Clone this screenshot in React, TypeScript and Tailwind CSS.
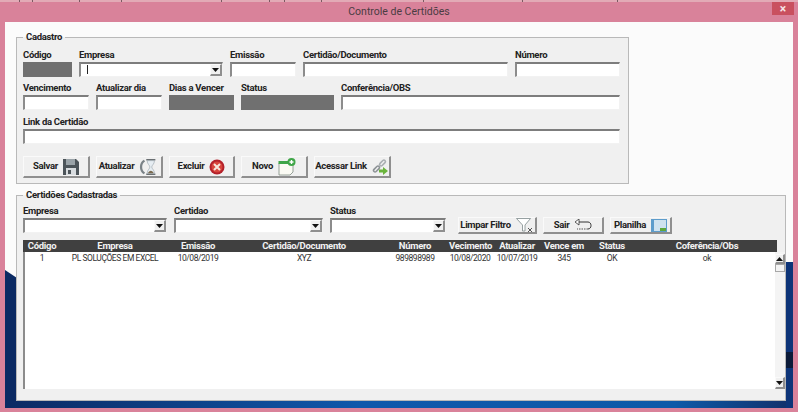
import React from "react";

const font = "font-['Roboto',sans-serif]";
const boldText = "text-[9.5px] tracking-[-0.3px] font-bold";

const sunken = "border-t-2 border-l-2 border-t-[#7d7d7d] border-l-[#8c8c8c] border-r border-b border-r-[#f2f2f2] border-b-[#f2f2f2]";
const raised = "flex items-center justify-center bg-[#f0f0f0] border-t border-l border-t-[#fafafa] border-l-[#fafafa] border-r-2 border-b-2 border-r-[#8f8f8f] border-b-[#8f8f8f]";

function Label({ children }: { children: React.ReactNode }) {
  return <div className={`h-[13px] leading-[12px] text-[#222] whitespace-nowrap ${boldText}`}>{children}</div>;
}

function Field({ label, width, gray }: { label: string; width: string; gray?: boolean }) {
  return (
    <div className={width}>
      <Label>{label}</Label>
      {gray ? <div className="h-[15px] bg-[#707070]" /> : <div className={`h-[15px] bg-white ${sunken}`} />}
    </div>
  );
}

function Arrow({ up }: { up?: boolean }) {
  return (
    <svg width="7" height="4" viewBox="0 0 7 4">
      <path d={up ? "M3.5 0L7 4H0z" : "M0 0h7L3.5 4z"} fill="#111" />
    </svg>
  );
}

function Combo({ label, width, caret }: { label: string; width: string; caret?: boolean }) {
  return (
    <div className={width}>
      <Label>{label}</Label>
      <div className={`h-[15px] bg-white flex items-end justify-between ${sunken}`}>
        {caret ? <div className="ml-[6px] mb-[2px] w-px h-[9px] bg-[#222]" /> : <div />}
        <div className={`w-[12px] h-[12px] ${raised}`}>
          <Arrow />
        </div>
      </div>
    </div>
  );
}

function Floppy() {
  return (
    <svg className="shrink-0" width="16" height="16" viewBox="0 0 16 16">
      <path d="M0 0h13l3 3v13H0z" fill="#4c5459" />
      <rect x="3" y="0" width="9" height="6" fill="#9aa3a8" />
      <rect x="3" y="9" width="10" height="7" fill="#d8dcdf" />
      <rect x="5" y="11" width="3" height="4" fill="#4c5459" />
    </svg>
  );
}

function Hourglass() {
  return (
    <svg className="shrink-0" width="20" height="18" viewBox="0 0 22 18">
      <path d="M6 2C1 5 1 13 6 16" fill="none" stroke="#7b8388" strokeWidth="2.5" />
      <path d="M8 1h10M8 17h10" stroke="#6a6f72" strokeWidth="1.5" />
      <path d="M9 2h8c0 4-3 5-3 7s3 3 3 7H9c0-4 3-5 3-7S9 6 9 2z" fill="#e6edf2" stroke="#9aa5ad" strokeWidth="0.7" />
      <path d="M10 16c0-2 2-3 3-3s3 1 3 3z" fill="#7a6a4f" />
    </svg>
  );
}

function RedX() {
  return (
    <svg className="shrink-0" width="16" height="16" viewBox="0 0 16 16">
      <circle cx="8" cy="8" r="7.5" fill="#b3202a" />
      <circle cx="8" cy="8" r="5.5" fill="#d8443c" />
      <path d="M5 5l6 6M11 5l-6 6" stroke="#f7e6dc" strokeWidth="2" />
    </svg>
  );
}

function NewNote() {
  return (
    <svg className="shrink-0" width="18" height="18" viewBox="0 0 18 18">
      <path d="M1 5h14v9l-3 3H1z" fill="#fbfbf4" stroke="#7d8a80" strokeWidth="0.8" />
      <rect x="0.5" y="3" width="10" height="3" fill="#3fa648" />
      <circle cx="13.5" cy="4" r="4" fill="#3fa648" />
      <path d="M13.5 2v4M11.5 4h4" stroke="#fff" strokeWidth="1.4" />
    </svg>
  );
}

function LinkIcon() {
  return (
    <svg className="shrink-0" width="17" height="17" viewBox="0 0 17 17">
      <rect x="-3.5" y="-1.5" width="7" height="3" rx="1.5" transform="translate(4.5 11) rotate(-45)" fill="none" stroke="#8d9296" strokeWidth="1.6" />
      <rect x="-3.5" y="-1.5" width="7" height="3" rx="1.5" transform="translate(10.5 5) rotate(-45)" fill="none" stroke="#a9aeb2" strokeWidth="1.6" />
      <path d="M7 11.5h4V9l5 4-5 4v-2.5H7z" fill="#6ab43c" />
    </svg>
  );
}

function FunnelX() {
  return (
    <svg className="shrink-0" width="18" height="15" viewBox="0 0 18 15">
      <path d="M0.5 0.5h14L9 7v6H6.5V7z" fill="#fff" stroke="#7e8a8c" strokeWidth="0.8" />
      <path d="M12 10l4 4M16 10l-4 4" stroke="#555" strokeWidth="1" />
    </svg>
  );
}

function ReturnArrow() {
  return (
    <svg className="shrink-0" width="18" height="12" viewBox="0 0 18 12">
      <path d="M4 3h10c4 0 4 7 0 7" fill="none" stroke="#333" strokeWidth="1" />
      <path d="M14 10H3" fill="none" stroke="#555" strokeWidth="1" strokeDasharray="1.5 1" />
      <path d="M5 0L1 3l4 3z" fill="#fff" stroke="#333" strokeWidth="0.8" />
    </svg>
  );
}

function Sheet() {
  return (
    <svg className="shrink-0" width="16" height="13" viewBox="0 0 16 13">
      <rect width="16" height="13" fill="#5d9ccb" />
      <rect x="3" y="1" width="12" height="11" fill="#cfe2ef" />
      <path d="M9 9h6v3H9z" fill="#5fa83c" />
    </svg>
  );
}

function ActionButton({ label, width, height, children }: { label: string; width: string; height: string; children: React.ReactNode }) {
  return (
    <div className={`${width} ${height} gap-[5px] ${raised}`}>
      <span className={`text-[#222] whitespace-nowrap ${boldText}`}>{label}</span>
      {children}
    </div>
  );
}

function Group({ title, width, children }: { title: string; width: string; children: React.ReactNode }) {
  return (
    <fieldset className={`${width} border border-[#b9b9b9] bg-[#f0f0f0] px-[6px]`}>
      <legend className={`px-[3px] leading-[12px] text-[#222] ${boldText}`}>{title}</legend>
      {children}
    </fieldset>
  );
}

const columns = "grid grid-cols-[38px_108px_58px_154px_68px_42px_52px_42px_54px_136px]";
const headers = ["Código", "Empresa", "Emissão", "Certidão/Documento", "Número", "Vecimento", "Atualizar", "Vence em", "Status", "Coferência/Obs"];
const row = ["1", "PL SOLUÇÕES EM EXCEL", "10/08/2019", "XYZ", "989898989", "10/08/2020", "10/07/2019", "345", "OK", "ok"];

const segments = ["w-[20px]", "w-[13px]", "w-[47px]", "w-[42px]", "w-[100px]", "w-[48px]", "w-[15px]", "w-[37px]", "w-[102px]", "w-[99px]", "w-[95px]"];

export default function App() {
  return (
    <div className={`w-[800px] h-[415px] bg-white overflow-hidden ${font}`}>
      <div className="w-[798px] h-[412px] bg-[#d9829a] flex flex-col">
        <div className="flex h-[2px] bg-[#e2aab6]">
          {segments.map((w, i) => (
            <div key={i} className={`${w} border-r border-r-[#7a5a62]`} />
          ))}
        </div>
        <div className="relative h-[20px] flex items-center justify-center text-[10.5px] text-[#4a3c42]">
          Controle de Certidões
          <div className="absolute right-[4px] top-0 w-[22px] h-[13px] bg-[#c9505f] flex items-center justify-center text-[12px] leading-none font-bold text-[#f7e3e6]">×</div>
        </div>
        <div className="relative flex-1 mx-[5px] mb-[4px] overflow-hidden">
          <svg className="absolute inset-0" width="788" height="386" viewBox="0 0 788 386">
            <defs>
              <linearGradient id="sky" x1="0" x2="1" y1="0" y2="0">
                <stop offset="0" stopColor="#0b2a63" />
                <stop offset="0.45" stopColor="#0f58ab" />
                <stop offset="0.85" stopColor="#0d5aa8" />
                <stop offset="1" stopColor="#12306a" />
              </linearGradient>
            </defs>
            <rect width="788" height="386" fill="#fbfbfb" />
            <path d="M0 248L12 256V386H0z" fill="#0b2a63" />
            <rect y="379" width="788" height="7" fill="url(#sky)" />
            <rect x="781" y="240" width="7" height="146" fill="#0d3478" />
            <rect x="781" y="330" width="7" height="16" fill="#0b1a38" />
          </svg>
          <div className="relative pt-[9px] pl-[11px] flex flex-col gap-[5px]">
            <Group title="Cadastro" width="w-[613px]">
              <div className="pt-[6px] flex flex-col gap-[5px]">
                <div className="flex gap-[7px]">
                  <Field label="Código" width="w-[49px]" gray />
                  <Combo label="Empresa" width="w-[144px]" caret />
                  <Field label="Emissão" width="w-[66px]" />
                  <Field label="Certidão/Documento" width="w-[205px]" />
                  <Field label="Número" width="w-[105px]" />
                </div>
                <div className="flex gap-[7px]">
                  <Field label="Vencimento" width="w-[66px]" />
                  <Field label="Atualizar dia" width="w-[66px]" />
                  <Field label="Dias a Vencer" width="w-[65px]" gray />
                  <Field label="Status" width="w-[93px]" gray />
                  <Field label="Conferência/OBS" width="w-[279px]" />
                </div>
                <div className="mt-px">
                  <Field label="Link da Certidão" width="w-[597px]" />
                </div>
              </div>
              <div className="flex gap-[6px] mt-[12px] mb-[5px]">
                <ActionButton label="Salvar" width="w-[67px]" height="h-[22px]"><Floppy /></ActionButton>
                <ActionButton label="Atualizar" width="w-[67px]" height="h-[22px]"><Hourglass /></ActionButton>
                <ActionButton label="Excluir" width="w-[66px]" height="h-[22px]"><RedX /></ActionButton>
                <ActionButton label="Novo" width="w-[67px]" height="h-[22px]"><NewNote /></ActionButton>
                <ActionButton label="Acessar Link" width="w-[77px]" height="h-[22px]"><LinkIcon /></ActionButton>
              </div>
            </Group>
            <Group title="Certidões Cadastradas" width="w-[770px]">
              <div className="pt-[4px] flex items-end">
                <div className="flex gap-[7px]">
                  <Combo label="Empresa" width="w-[144px]" />
                  <Combo label="Certidao" width="w-[149px]" />
                  <Combo label="Status" width="w-[116px]" />
                </div>
                <div className="flex ml-[12px] gap-[6px] -mb-px">
                  <ActionButton label="Limpar Filtro" width="w-[79px]" height="h-[17px]"><FunnelX /></ActionButton>
                  <ActionButton label="Sair" width="w-[61px]" height="h-[17px]"><ReturnArrow /></ActionButton>
                  <ActionButton label="Planilha" width="w-[62px]" height="h-[17px]"><Sheet /></ActionButton>
                </div>
              </div>
              <div className="mt-[7px] mb-[11px] w-[754px]">
                <div className={`${columns} h-[12px] bg-[#404040] leading-[12px] text-[#f2f2f2] text-center whitespace-nowrap ${boldText}`}>
                  {headers.map((h) => (
                    <div key={h}>{h}</div>
                  ))}
                </div>
                <div className="h-[137px] bg-white border-l-2 border-l-[#8c8c8c] flex">
                  <div className={`${columns} flex-1 h-[12px] -ml-[2px] text-[8.5px] tracking-[-0.45px] leading-[12px] text-[#333] text-center whitespace-nowrap`}>
                    {row.map((c) => (
                      <div key={c}>{c}</div>
                    ))}
                  </div>
                  <div className="w-[12px] pt-[2px] flex flex-col bg-[#f4f4f4]">
                    <div className={`h-[10px] ${raised}`}><Arrow up /></div>
                    <div className="h-[8px] bg-[#f4f4f4] border border-[#a8a8a8]" />
                    <div className="flex-1" />
                    <div className={`h-[12px] ${raised}`}><Arrow /></div>
                  </div>
                </div>
              </div>
            </Group>
          </div>
        </div>
      </div>
    </div>
  );
}
